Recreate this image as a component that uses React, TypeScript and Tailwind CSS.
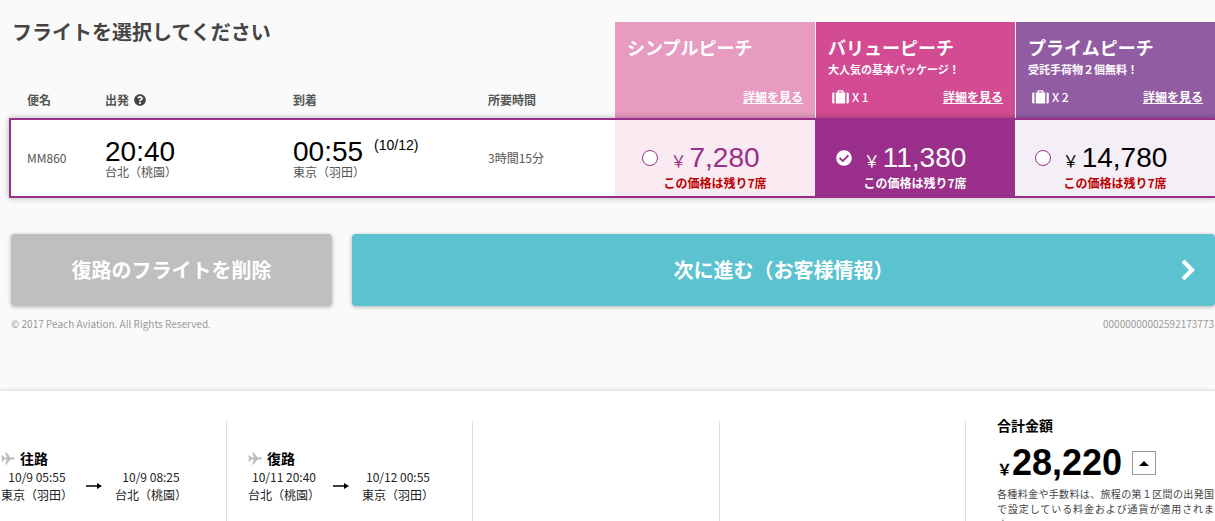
import React from "react";
import { FaCheckCircle, FaQuestionCircle } from "react-icons/fa";

type Fare = {
  id: string;
  name: string;
  note?: string;
  bags?: string;
  price: string;
  head: string;
  cell: string;
  priceColor: string;
  seatColor: string;
};

const fares: Fare[] = [
  { id: "simple", name: "シンプルピーチ", price: "7,280", head: "bg-[#e79bc1]", cell: "bg-[#faeaf2]", priceColor: "text-[#992f8a]", seatColor: "text-[#bb0000]" },
  { id: "value", name: "バリューピーチ", note: "大人気の基本パッケージ！", bags: "X 1", price: "11,380", head: "bg-[#d24b93] border-l border-[#fafafa]", cell: "bg-[#992f8a]", priceColor: "text-white", seatColor: "text-white" },
  { id: "prime", name: "プライムピーチ", note: "受託手荷物２個無料！", bags: "X 2", price: "14,780", head: "bg-[#925ca3] border-l border-[#fafafa]", cell: "bg-[#f4eef7]", priceColor: "text-black", seatColor: "text-[#bb0000]" },
];

const legs = [
  { title: "往路", from: "東京（羽田）", fromTime: "10/9 05:55", to: "台北（桃園）", toTime: "10/9 08:25" },
  { title: "復路", from: "台北（桃園）", fromTime: "10/11 20:40", to: "東京（羽田）", toTime: "10/12 00:55" },
];

const line = "border-y-2 border-[#992f8a] p-0";

function Suitcase() {
  return (
    <svg viewBox="0 0 17 14" className="h-[14px] w-[17px]" fill="currentColor" aria-hidden="true">
      <path d="M2.400 2.500v11H1.500A1.300 1.300 0 0 1 .2 12.200V3.800A1.300 1.300 0 0 1 1.500 2.500z" />
      <path d="M14.600 2.500v11h.9a1.300 1.300 0 0 0 1.300-1.300V3.800a1.300 1.300 0 0 0-1.300-1.300z" />
      <path d="M3.800 2.500H5.400V1.200Q5.400.2 6.400.2h4.200q1 0 1 1v1.300h1.600v11H3.800zM6.700 2.500h3.600v-1H6.700z" fillRule="evenodd" />
    </svg>
  );
}

function Plane() {
  return (
    <svg viewBox="0 0 14 13" className="h-[13px] w-[14px] text-[#bbb]" fill="currentColor" aria-hidden="true">
      <path d="M.3 3.500h1.300L3.500 5.600H6L4 .4h1.500l4 5.200h2.800c1 0 1.600.4 1.600.9s-.6.9-1.600.9H9.500l-4 5.200H4l2-5.200H3.500L1.600 9.500H.3l.8-3z" />
    </svg>
  );
}

function FlightTable() {
  const [selected, setSelected] = React.useState("value");
  return (
    <table className="w-full table-fixed border-separate border-spacing-0 text-left text-xs text-[#555]">
      <colgroup>
        <col className="w-24" />
        <col className="w-47" />
        <col className="w-[195px]" />
        <col />
        <col className="w-50" />
        <col className="w-50" />
        <col className="w-50" />
      </colgroup>
      <thead>
        <tr className="h-24 align-bottom">
          <th className="p-0 pb-2 pl-[18px] leading-5 font-bold">便名</th>
          <th className="p-0 pb-2 leading-5 font-bold">
            <span className="flex items-center gap-[5px]">
              出発
              <button type="button" aria-label="出発について">
                <FaQuestionCircle className="size-3 text-[#444]" />
              </button>
            </span>
          </th>
          <th className="p-0 pb-2 leading-5 font-bold">到着</th>
          <th className="p-0 pb-2 leading-5 font-bold">所要時間</th>
          {fares.map((f) => (
            <th key={f.id} className={`p-0 align-top font-bold text-white ${f.head}`}>
              <div className="flex h-24 flex-col px-3 pt-[15px]">
                <span className="text-lg leading-5">{f.name}</span>
                <span className="h-6 text-[11px] leading-6">{f.note}</span>
                <div className="mt-1 flex h-6 items-center">
                  {f.bags && (
                    <span className="flex items-center gap-[3px] pl-1 font-medium">
                      <Suitcase />
                      {f.bags}
                    </span>
                  )}
                  <a href="#details" className="ml-auto underline">詳細を見る</a>
                </div>
              </div>
            </th>
          ))}
        </tr>
      </thead>
      <tbody>
        <tr className="h-20 bg-white shadow-[0_0_6px_rgba(0,0,0,0.3)]">
          <td className={`${line} border-l-2 pl-4`}>MM860</td>
          <td className={line}>
            <div className="pt-1 font-['Liberation_Sans',sans-serif] text-[28px] leading-6 text-black">20:40</div>
            <div className="leading-4">台北（桃園）</div>
          </td>
          <td className={line}>
            <div className="flex items-start gap-[11px] pt-1 font-['Liberation_Sans',sans-serif] text-[28px] leading-6 text-black">
              00:55
              <span className="text-sm leading-[10px]">(10/12)</span>
            </div>
            <div className="leading-4">東京（羽田）</div>
          </td>
          <td className={line}>3時間15分</td>
          {fares.map((f) => (
            <td key={f.id} className={`${line} ${f.cell}`}>
              <label className="flex h-19 cursor-pointer flex-col items-center pt-6">
                <span className="relative flex items-start gap-3 pr-7">
                  <input type="radio" name="fare" checked={selected === f.id} onChange={() => setSelected(f.id)} className="sr-only" />
                  {selected === f.id ? (
                    <FaCheckCircle className="mt-1.5 size-4 text-white" />
                  ) : (
                    <span className="mt-1.5 size-4 rounded-full border border-[#992f8a] bg-white" />
                  )}
                  <span className={`flex h-[29px] items-baseline gap-[3px] leading-7 ${f.priceColor}`}>
                    <span className="text-base leading-7">￥</span>
                    <span className="font-['Liberation_Sans',sans-serif] text-[28px]">{f.price}</span>
                  </span>
                </span>
                <span className={`leading-5 font-bold ${f.seatColor}`}>この価格は残り7席</span>
              </label>
            </td>
          ))}
        </tr>
      </tbody>
    </table>
  );
}

export default function App() {
  return (
    <div className="min-h-screen overflow-hidden bg-[#fafafa] font-['Noto_Sans_CJK_JP',sans-serif] text-black">
      <main className="pt-[22px] pl-[9px]">
        <div className="relative">
          <h1 className="absolute top-0 left-[3px] text-xl leading-5 font-bold text-[#444]">フライトを選択してください</h1>
          <FlightTable />
        </div>
        <div className="mt-9 ml-[2px] flex gap-5 text-xl font-bold text-white">
          <button type="button" className="h-18 w-[321px] rounded-sm bg-[#bfbfbf] shadow-[0_1px_4px_rgba(0,0,0,0.3)]">復路のフライトを削除</button>
          <button type="button" className="flex h-18 flex-1 items-center rounded-sm bg-[#5bc2d0] pr-5 pl-[34px] shadow-[0_1px_4px_rgba(0,0,0,0.3)]">
            <span className="flex-1">次に進む（お客様情報）</span>
            <svg viewBox="0 0 14 22" className="h-[22px] w-[14px]" fill="none" stroke="currentColor" strokeWidth="4.2">
              <path d="M2 2 11 11 2 20" />
            </svg>
          </button>
        </div>
        <div className="mt-2 ml-[2px] flex justify-between pr-px text-[10px] leading-5 text-[#999]">
          <small className="text-[10px]">© 2017 Peach Aviation. All Rights Reserved.</small>
          <span>00000000002592173773</span>
        </div>
      </main>
      <footer className="mt-14 border-t border-[#e2e2e2] bg-white pt-[30px] shadow-[0_0_4px_rgba(0,0,0,0.1)]">
        <div className="grid grid-cols-[227px_repeat(3,minmax(0,1fr))_249px]">
          {legs.map((l, i) => (
            <section key={l.title} className={`border-r border-[#ddd] pt-[27px] ${i === 0 ? "pl-px" : "pl-[21px]"}`}>
              <h2 className="flex items-center gap-[5px] text-sm leading-5 font-bold">
                <Plane />
                {l.title}
              </h2>
              <div className="flex items-center text-center text-xs leading-[18px] text-[#222]">
                <div>
                  <div>{l.fromTime}</div>
                  <div>{l.from}</div>
                </div>
                <svg viewBox="0 0 16 8" className="mx-[13px] h-2 w-4" fill="black">
                  <path d="M0 3.200h11V1L16 4l-5 3V4.800H0z" />
                </svg>
                <div>
                  <div>{l.toTime}</div>
                  <div>{l.to}</div>
                </div>
              </div>
            </section>
          ))}
          <div className="border-r border-[#ddd]" />
          <div className="border-r border-[#ddd]" />
          <section className="pr-px pl-[31px]">
            <h2 className="-mt-1.5 text-sm leading-5 font-bold">合計金額</h2>
            <div className="mt-2 flex items-center gap-2.5">
              <p className="flex items-baseline font-bold">
                <span className="text-[15px]">￥</span>
                <span className="font-['Liberation_Sans',sans-serif] text-4xl">28,220</span>
              </p>
              <button type="button" aria-label="内訳を表示" className="flex size-6 items-center justify-center border border-[#999] bg-white">
                <svg viewBox="0 0 10 5" className="h-[5px] w-[10px]">
                  <path d="M0 5 5 0l5 5z" />
                </svg>
              </button>
            </div>
            <p className="mt-[3px] text-justify text-[10px] leading-[15px] text-[#444]">
              各種料金や手数料は、旅程の第１区間の出発国で設定している料金および通貨が適用されます。
            </p>
          </section>
        </div>
      </footer>
    </div>
  );
}
